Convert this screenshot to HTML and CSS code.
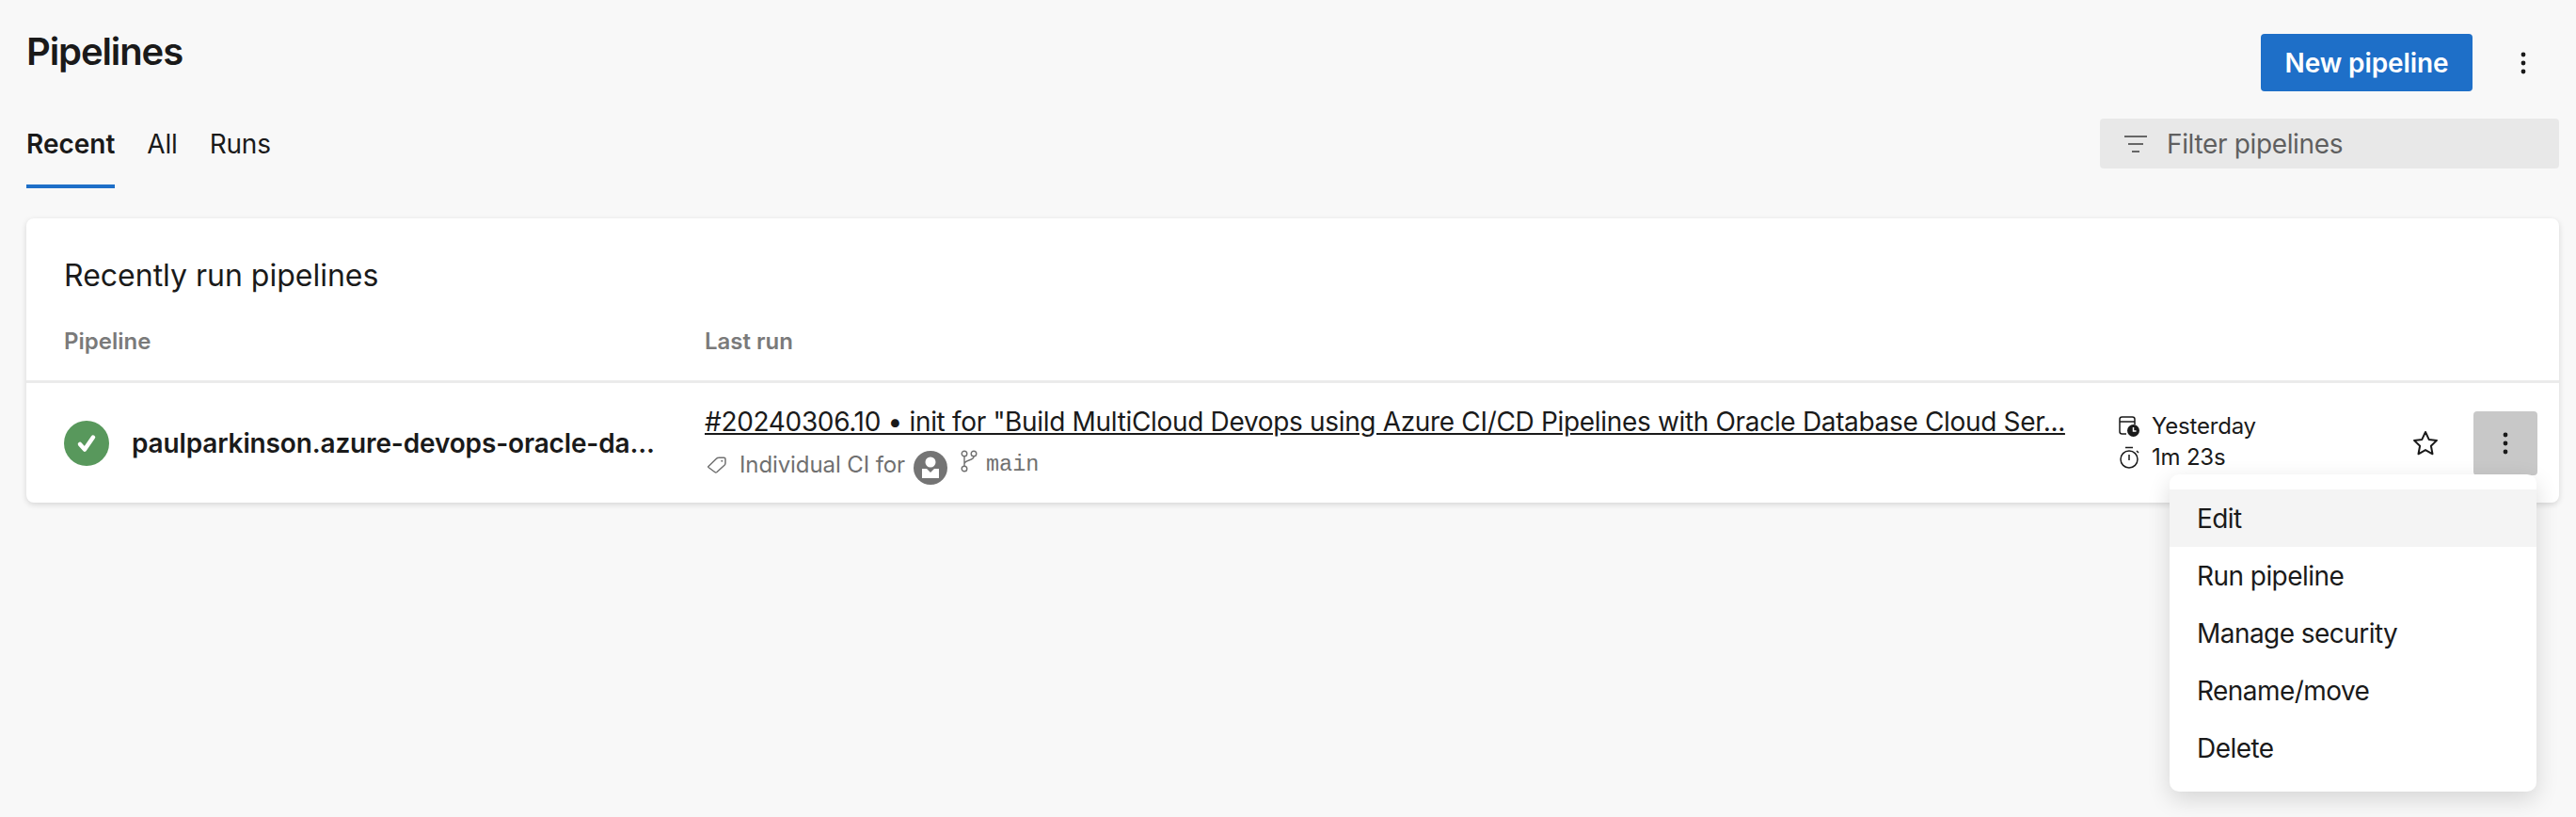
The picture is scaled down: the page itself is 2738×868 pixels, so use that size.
FILE: index.html
```html
<!DOCTYPE html>
<html lang="en">
<head>
  <meta charset="UTF-8">
  <title>Pipelines</title>
  <link rel="stylesheet" href="styles.css">
</head>
<body>
  <div class="page">
    <div class="head">
      <h1>Pipelines</h1>
      <div class="head-actions">
        <button class="primary">New pipeline</button>
        <span class="more">
          <svg width="6" height="24" viewBox="0 0 6 24"><circle cx="3" cy="3" r="2.4"/><circle cx="3" cy="12" r="2.4"/><circle cx="3" cy="21" r="2.4"/></svg>
        </span>
      </div>
    </div>

    <div class="tabbar">
      <nav class="tabs">
        <a class="tab active" href="#">Recent</a>
        <a class="tab" href="#">All</a>
        <a class="tab" href="#">Runs</a>
      </nav>
      <div class="filter">
        <svg width="24" height="18" viewBox="0 0 24 18" fill="none" stroke="#666" stroke-width="2"><path d="M0 1h24M4 9h16M8 17h8"/></svg>
        <span>Filter pipelines</span>
      </div>
    </div>

    <section class="card">
      <h2>Recently run pipelines</h2>
      <div class="columns">
        <span class="col-name">Pipeline</span>
        <span class="col-run">Last run</span>
      </div>
      <div class="row">
        <div class="col-name name-cell">
          <svg class="status" width="48" height="48" viewBox="0 0 48 48"><circle cx="24" cy="24" r="24" fill="#58985c"/><path d="M17 25l5 5.500 9-13" fill="none" stroke="#fff" stroke-width="4.500" stroke-linecap="round" stroke-linejoin="round"/></svg>
          <span class="name">paulparkinson.azure-devops-oracle-da...</span>
        </div>
        <div class="col-run run-cell">
          <a class="run-link" href="#">#20240306.10 • init for "Build MultiCloud Devops using Azure CI/CD Pipelines with Oracle Database Cloud Ser...</a>
          <div class="run-meta">
            <svg class="tag" width="20" height="18" viewBox="0 0 20 18" fill="none" stroke="#707070" stroke-width="1.500" stroke-linejoin="round"><path d="M1 10.500L9.500 2.200Q10.500 1.200 12 1.200H17.500Q19 1.200 19 2.700V7Q19 8.300 18 9.300L10 16.500Q8.800 17.400 7.700 16.500L1 11.500Q.5 11 1 10.500Z"/><circle cx="15.300" cy="4.800" r="1" fill="#707070" stroke="none"/></svg>
            <span class="reason">Individual CI for</span>
            <svg class="avatar" width="36" height="36" viewBox="0 0 36 36"><circle cx="18" cy="18" r="18" fill="#747474"/><circle cx="18" cy="12" r="5.500" fill="#fff"/><path d="M9 19h5l4 4 4-4h5v10H9z" fill="#fff"/></svg>
            <svg class="branch" width="18" height="24" viewBox="0 0 18 24" fill="none" stroke="#707070" stroke-width="1.400"><circle cx="4" cy="4" r="2.800"/><circle cx="14" cy="4" r="2.800"/><circle cx="4" cy="20" r="2.800"/><path d="M4 7v10M14 7c0 5-10 3-10 8"/></svg>
            <code>main</code>
          </div>
        </div>
        <div class="time-cell">
          <div class="time-line">
            <svg width="22" height="22" viewBox="0 0 22 22" fill="none" stroke="#1a1a1a" stroke-width="1.500"><path d="M8 19H3.500Q1 19 1 16.500V3.500Q1 1 3.500 1H14.500Q17 1 17 3.500V9M1 6h16"/><circle cx="15.500" cy="15.500" r="6.500" fill="#1a1a1a" stroke="none"/><path d="M15.500 12v4h3" stroke="#fff"/></svg>
            <span>Yesterday</span>
          </div>
          <div class="time-line">
            <svg width="22" height="24" viewBox="0 0 22 24" fill="none" stroke="#1a1a1a" stroke-width="1.500"><circle cx="11" cy="14" r="9"/><path d="M7 1.500h8M11 9v6M19 5l2 2"/></svg>
            <span>1m 23s</span>
          </div>
        </div>
        <div class="row-actions">
          <svg class="star" width="28" height="27" viewBox="0 0 28 27" fill="none" stroke="#1a1a1a" stroke-width="2" stroke-linejoin="round"><path d="M14 2l3.700 7.900 8.300 1-6.100 5.900 1.600 8.500L14 21.100l-7.500 4.200 1.600-8.500L2 10.900l8.300-1z"/></svg>
          <span class="row-more">
            <svg width="6" height="24" viewBox="0 0 6 24"><circle cx="3" cy="3" r="2.400"/><circle cx="3" cy="12" r="2.400"/><circle cx="3" cy="21" r="2.400"/></svg>
          </span>
        </div>
      </div>
    </section>
  </div>

  <ul class="menu">
    <li class="selected">Edit</li>
    <li>Run pipeline</li>
    <li>Manage security</li>
    <li>Rename/move</li>
    <li>Delete</li>
  </ul>
</body>
</html>
```

FILE: styles.css
```css
* {
  box-sizing: border-box;
}
html, body {
  height: 100%;
}
body {
  margin: 0;
  background-color: #f8f8f8;
  font-family: Inter, 'Liberation Sans', sans-serif;
  color: #1a1a1a;
  overflow: hidden;
  position: relative;
}
.page {
  padding: 36px 18px 0 28px;
}
.head {
  display: flex;
  justify-content: space-between;
  align-items: flex-start;
  height: 61px;
}
h1 {
  margin: -7px 0 0;
  font-size: 40px;
  line-height: 52px;
  font-weight: 600;
  letter-spacing: -1.1px;
}
.head-actions {
  display: flex;
  align-items: center;
  height: 61px;
}
.primary {
  width: 225px;
  height: 61px;
  border: none;
  border-radius: 4px;
  background-color: #1e6fc8;
  color: white;
  font-family: inherit;
  font-size: 28px;
  font-weight: 600;
  letter-spacing: -0.1px;
}
.more {
  display: flex;
  width: 92px;
  padding-left: 51px;
}
.more svg, .row-more svg {
  fill: #1a1a1a;
}
.tabbar {
  display: flex;
  justify-content: space-between;
  align-items: flex-start;
  margin-top: 29px;
}
.tabs {
  display: flex;
  gap: 34px;
}
.tab {
  height: 74px;
  padding-top: 9px;
  font-size: 28px;
  line-height: 36px;
  letter-spacing: -0.2px;
  color: #1a1a1a;
  text-decoration: none;
}
.tab.active {
  font-weight: 600;
  letter-spacing: 0;
  border-bottom: 4px solid #1e6fc8;
}
.filter {
  display: flex;
  align-items: center;
  width: 488px;
  height: 53px;
  padding-left: 26px;
  gap: 21px;
  background-color: #e8e8e8;
  border-radius: 4px;
  font-size: 28px;
  letter-spacing: -0.35px;
  color: #5f5f5f;
}
.card {
  margin-top: 32px;
  height: 302px;
  background-color: white;
  border-radius: 8px;
  box-shadow: 0 2px 6px rgba(0,0,0,0.14);
}
h2 {
  margin: 0;
  padding: 41px 0 0 40px;
  font-size: 32px;
  line-height: 40px;
  font-weight: 400;
}
.columns {
  display: flex;
  height: 94px;
  padding: 35px 0 0 40px;
  border-bottom: 3px solid #ebebeb;
  font-size: 24px;
  line-height: 30px;
  font-weight: 600;
  color: #7a7a7a;
}
.col-name {
  width: 681px;
  flex-shrink: 0;
}
.row {
  display: flex;
  align-items: center;
  height: 127px;
  padding: 0 24px 0 40px;
}
.name-cell {
  display: flex;
  align-items: center;
  gap: 24px;
}
.name {
  font-size: 28px;
  font-weight: 600;
  letter-spacing: -0.15px;
  white-space: nowrap;
}
.run-cell {
  width: 1503px;
  flex-shrink: 0;
}
.run-link {
  display: block;
  font-size: 28px;
  line-height: 36px;
  letter-spacing: -0.33px;
  color: #1a1a1a;
  white-space: nowrap;
}
.run-meta {
  display: flex;
  align-items: center;
  height: 36px;
  margin-top: 10px;
  font-size: 24px;
  letter-spacing: -0.1px;
  color: #707070;
}
.tag {
  margin: 0 14px 0 3px;
}
.avatar {
  margin: 6px 14px 0 9px;
}
.branch {
  margin: -8px 9px 0 0;
}
code {
  font-family: 'Liberation Mono', monospace;
  font-size: 23.500px;
  letter-spacing: 0;
}
.time-cell {
  width: 312px;
  flex-shrink: 0;
  padding-bottom: 3px;
  font-size: 24px;
  letter-spacing: -0.2px;
}
.time-line {
  display: flex;
  align-items: center;
  gap: 13px;
  height: 33px;
}
.row-actions {
  display: flex;
  align-items: center;
  gap: 37px;
}
.row-more {
  display: flex;
  align-items: center;
  justify-content: center;
  width: 68px;
  height: 68px;
  background-color: #c8c8c8;
  border-radius: 4px;
}
.menu {
  position: absolute;
  top: 504px;
  left: 2306px;
  width: 390px;
  height: 337px;
  margin: 0;
  padding: 16px 0;
  list-style: none;
  background-color: white;
  border-radius: 10px;
  box-shadow: 0 8px 24px rgba(0,0,0,0.14);
}
.menu li {
  height: 61px;
  padding-left: 29px;
  font-size: 28px;
  line-height: 63px;
  letter-spacing: -0.55px;
}
.menu .selected {
  background-color: #f4f4f4;
}
```
